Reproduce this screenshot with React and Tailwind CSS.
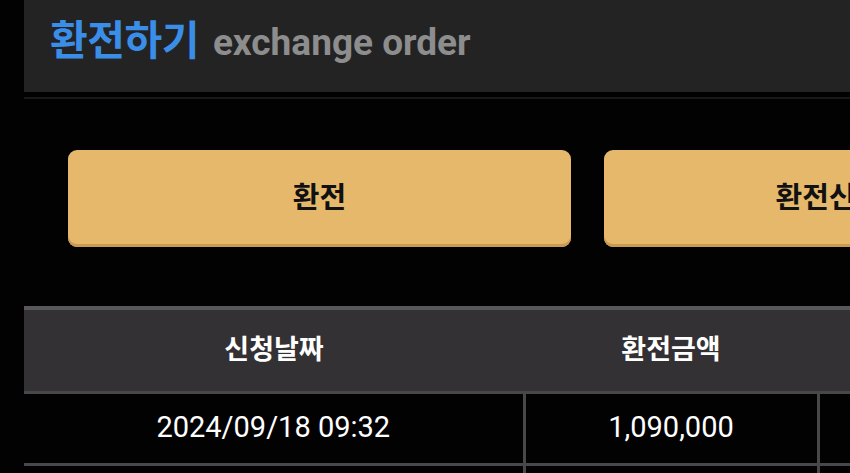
export default function App() {
  const rows = [{ date: "2024/09/18 09:32", amount: "1,090,000" }];

  return (
    <div
      className="min-h-[473px] w-[850px] overflow-hidden bg-[#030203] pl-[24px]"
      style={{ fontFamily: 'Roboto, "Noto Sans CJK KR", sans-serif' }}
    >
      {/* page title */}
      <div className="flex h-[92px] w-[900px] items-center bg-[#232324] pl-[26px]">
        <h1 className="flex items-baseline gap-[14px] pb-[10px]">
          <span className="text-[41px] font-bold leading-none tracking-[-0.5px] text-[#3b8ee8]">환전하기</span>
          <span className="text-[37px] font-bold leading-none text-[#8d8d8d]">exchange order</span>
        </h1>
      </div>
      <div className="mt-[5px] h-[2px] w-[900px] bg-[#19191a]" />

      {/* action buttons */}
      <div className="mt-[51px] flex w-[1200px] gap-[33px] pl-[44px]">
        <button className="h-[97px] w-[503px] rounded-[9px] bg-[#e5b86c] text-[29px] font-bold text-[#111] shadow-[inset_0_-3px_0_#c99a52]">
          환전
        </button>
        <button className="h-[97px] w-[503px] rounded-[9px] bg-[#e5b86c] text-[29px] font-bold text-[#111] shadow-[inset_0_-3px_0_#c99a52]">
          환전신청내역
        </button>
      </div>

      {/* history table */}
      <table className="mt-[59px] w-[1100px] table-fixed border-collapse">
        <thead>
          <tr className="h-[84px] border-t-[4px] border-t-[#58575a] bg-[#333134]">
            <th className="w-[500px] border-b-[3px] border-b-[#48474a] text-[27px] font-bold text-white">신청날짜</th>
            <th className="w-[294px] border-b-[3px] border-b-[#48474a] text-[27px] font-bold text-white">환전금액</th>
            <th className="border-b-[3px] border-b-[#48474a] text-[27px] font-bold text-white">상태</th>
          </tr>
        </thead>
        <tbody>
          {rows.map((row) => (
            <tr key={row.date} className="h-[72px]">
              <td className="border-r-[3px] border-b-[3px] border-[#48474a] text-center text-[29px] text-white">{row.date}</td>
              <td className="border-r-[3px] border-b-[3px] border-[#48474a] text-center text-[29px] text-white">{row.amount}</td>
              <td className="border-b-[3px] border-[#48474a] text-center text-[29px] text-white">완료</td>
            </tr>
          ))}
          <tr className="h-[60px]">
            <td className="border-r-[3px] border-[#48474a]" />
            <td className="border-r-[3px] border-[#48474a]" />
            <td />
          </tr>
        </tbody>
      </table>
    </div>
  );
}
